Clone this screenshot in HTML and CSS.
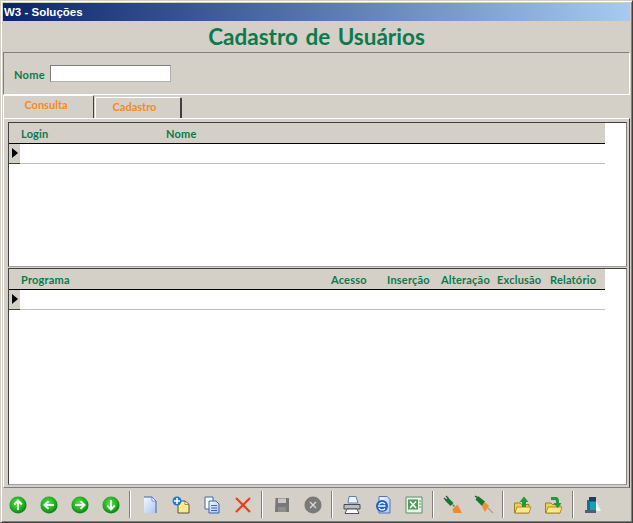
FILE: index.html
```html
<!DOCTYPE html>
<html lang="pt-BR">
<head>
 <meta charset="UTF-8">
 <title>W3 - Soluções</title>
 <link rel="stylesheet" href="styles.css">
</head>
<body>

<div class="janela">
  <div class="titulo-janela">W3 - Soluções</div>
  <h1 class="titulo">Cadastro de Usuários</h1>

  <div class="filtro">
    <label for="nome">Nome</label>
    <input type="text" id="nome">
  </div>

  <div class="abas">
    <div class="aba ativa">Consulta</div>
    <div class="aba">Cadastro</div>
  </div>

  <div class="painel">
    <div class="grade grade-login">
      <div class="cabecalho">
        <span>Login</span>
        <span>Nome</span>
      </div>
      <div class="linha"><div class="indicador"></div></div>
    </div>
    <div class="grade grade-programa">
      <div class="cabecalho">
        <span>Programa</span>
        <span>Acesso</span>
        <span>Inserção</span>
        <span>Alteração</span>
        <span>Exclusão</span>
        <span>Relatório</span>
      </div>
      <div class="linha"><div class="indicador"></div></div>
    </div>
  </div>

  <div class="barra">
    <svg width="0" height="0" class="defs">
      <defs>
        <radialGradient id="verde" cx="0.45" cy="0.4" r="0.6">
          <stop offset="0" stop-color="#5fe04f"/>
          <stop offset="0.65" stop-color="#22b022"/>
          <stop offset="1" stop-color="#0b7d12"/>
        </radialGradient>
        <linearGradient id="folha" x1="0" y1="0" x2="1" y2="1">
          <stop offset="0" stop-color="#f4f8ff"/>
          <stop offset="1" stop-color="#a9c6f2"/>
        </linearGradient>
      </defs>
    </svg>
    <!-- navegacao -->
    <div class="botao"><svg width="20" height="20" viewBox="0 0 20 20"><circle cx="10" cy="10" r="8.5" fill="url(#verde)"/><path d="M10 15V6M6.2 9.5 10 5.5 13.8 9.5" fill="none" stroke="#eaffea" stroke-width="2"/></svg></div>
    <div class="botao"><svg width="20" height="20" viewBox="0 0 20 20"><circle cx="10" cy="10" r="8.5" fill="url(#verde)"/><path d="M15 10H6M9.5 6.2 5.5 10 9.5 13.8" fill="none" stroke="#eaffea" stroke-width="2"/></svg></div>
    <div class="botao"><svg width="20" height="20" viewBox="0 0 20 20"><circle cx="10" cy="10" r="8.5" fill="url(#verde)"/><path d="M5 10H14M10.5 6.2 14.5 10 10.5 13.8" fill="none" stroke="#eaffea" stroke-width="2"/></svg></div>
    <div class="botao"><svg width="20" height="20" viewBox="0 0 20 20"><circle cx="10" cy="10" r="8.5" fill="url(#verde)"/><path d="M10 5V14M6.2 10.5 10 14.5 13.8 10.5" fill="none" stroke="#eaffea" stroke-width="2"/></svg></div>
    <div class="sep"></div>
    <!-- registro -->
    <div class="botao"><svg width="18" height="20" viewBox="0 0 18 20"><path d="M3 2H11L15 6V18H3Z" fill="url(#folha)"/><path d="M3 2H11L15 6V18" fill="none" stroke="#3f66b0"/><path d="M11 2V6H15Z" fill="#fff" stroke="#3f66b0" stroke-width="0.6"/></svg></div>
    <div class="botao"><svg width="20" height="20" viewBox="0 0 20 20"><path d="M7 6H14L18 9.5V18H7Z" fill="#fbe98e" stroke="#55533c"/><path d="M14 6V9.5H18Z" fill="#fff" stroke="#55533c" stroke-width="0.6"/><circle cx="6" cy="6" r="4.5" fill="#1f78d8"/><path d="M6 3V9M3 6H9" stroke="#fff" stroke-width="1.6"/></svg></div>
    <div class="botao"><svg width="18" height="20" viewBox="0 0 18 20"><path d="M2 2H10V14H2Z" fill="#fff" stroke="#3f66b0"/><path d="M6 6H13L16 9V18H6Z" fill="url(#folha)" stroke="#3f66b0"/><path d="M8 10.5H14M8 13H14M8 15.5H14" stroke="#3f66b0"/></svg></div>
    <div class="botao"><svg width="18" height="18" viewBox="0 0 18 18"><path d="M2 2 16 16M16 2 2 16" stroke="#e8401c" stroke-width="2.2"/></svg></div>
    <div class="sep"></div>
    <div class="botao"><svg width="16" height="16" viewBox="0 0 16 16"><path d="M1.5 1H15V15H1Z" fill="#787878"/><path d="M4 1.5H12V6H4Z" fill="#c8c8c8"/><path d="M4 10H12V15H4Z" fill="#8e8e8e"/></svg></div>
    <div class="botao"><svg width="20" height="20" viewBox="0 0 20 20"><circle cx="10" cy="10" r="8.5" fill="#7a7a7a"/><path d="M7 7 13 13M13 7 7 13" stroke="#ddd" stroke-width="1.2"/></svg></div>
    <div class="sep"></div>
    <!-- saida -->
    <div class="botao"><svg width="20" height="20" viewBox="0 0 20 20"><path d="M7 1.5H14L16 8H6Z" fill="#eef3fa" stroke="#6080a8"/><path d="M2 9.5H18V14H2Z" fill="#b4bcc8" stroke="#4a4a58"/><path d="M5 14H15L17 18.5H3Z" fill="#fff" stroke="#555"/></svg></div>
    <div class="botao"><svg width="20" height="20" viewBox="0 0 20 20"><path d="M6 1.5H14L17 4.5V18H6Z" fill="url(#folha)" stroke="#4f74b8"/><circle cx="9" cy="11" r="6" fill="#1f63c8"/><path d="M5 11H12.5M12 9A3.5 3.5 0 0 0 6 9.5M6 13A3.5 3.5 0 0 0 12 13.5" fill="none" stroke="#fff" stroke-width="1.3"/></svg></div>
    <div class="botao"><svg width="20" height="20" viewBox="0 0 20 20"><path d="M2 2H18V18H2Z" fill="#e8f2e4" stroke="#5c8f6a"/><path d="M4 4.5H14V14.5H4Z" fill="#4f9c5c"/><path d="M6 6.5 12 13M12 6.5 6 13" stroke="#fff" stroke-width="1.6"/><path d="M15 6H17M15 9H17M15 12H17" stroke="#5c8f6a"/></svg></div>
    <div class="sep"></div>
    <div class="botao"><svg width="20" height="20" viewBox="0 0 20 20"><path d="M1 3 3.5 5.5M3 1 5.5 3.5" stroke="#444" stroke-width="1.2"/><path d="M5 2.5 10.5 8 7.5 11 2 5.5Z" fill="#0f7a2c"/><path d="M9.5 9.5 11.5 11.5" stroke="#777" stroke-width="1.5"/><path d="M14.5 9.5 19 18 10.5 18 9.5 14Z" fill="#f08a30"/></svg></div>
    <div class="botao"><svg width="20" height="20" viewBox="0 0 20 20"><path d="M1 1 4 3" stroke="#444" stroke-width="1.4"/><path d="M4 1 11 6.5 8 11 1.5 4.5Z" fill="#0f7a2c"/><path d="M11 7 15 11 11 17 8 11.5Z" fill="#f29030"/><path d="M14 13 19 18" stroke="#a8a090" stroke-width="1.2"/></svg></div>
    <div class="sep"></div>
    <div class="botao"><svg width="20" height="20" viewBox="0 0 20 20"><path d="M1.5 8H7L8.5 9.5H16V18H1.5Z" fill="#f2cc5a" stroke="#9c8028"/><path d="M2 18 4 12H18L16 18Z" fill="#fbe68c" stroke="#b09030"/><path d="M11 1.5 15.5 7H13V12H9V7H6.5Z" fill="#1f9a3a"/></svg></div>
    <div class="botao"><svg width="20" height="20" viewBox="0 0 20 20"><path d="M1.5 8H7L8.5 9.5H16V18H1.5Z" fill="#f2cc5a" stroke="#9c8028"/><path d="M2 18 4 12H18L16 18Z" fill="#fbe68c" stroke="#b09030"/><path d="M7 2H12C14 2 15 4 15 6V8H17.5L13.5 13 9.5 8H12V6C12 5 11 5 10 5H7Z" fill="#1f9a3a"/></svg></div>
    <div class="sep"></div>
    <div class="botao"><svg width="20" height="20" viewBox="0 0 20 20"><path d="M4 5H13V15H4Z" fill="#17708e"/><path d="M6 2H13V6H6Z" fill="#1d3c66"/><path d="M7 7H13V15H7Z" fill="#1ea0b4"/><path d="M2 15H13V18H2Z" fill="#565c6c"/><path d="M13 6 18 16H13Z" fill="#eef6f8"/></svg></div>
  </div>
</div>

</body>
</html>
```

FILE: styles.css
```css
* {
  box-sizing: border-box;
}

html, body {
  margin: 0;
  height: 100%;
  overflow: hidden;
}

body {
  background-color: #d4d0c8;
  font-family: Lato, sans-serif;
}

.janela {
  width: 633px;
  height: 523px;
  padding: 2px;
  border-top: 1px solid #d4d0c8;
  border-left: 1px solid #d4d0c8;
  border-right: 1px solid #404040;
  border-bottom: 1px solid #404040;
  box-shadow: inset 1px 1px 0 #fff, inset -1px -1px 0 #808080;
  display: flex;
  flex-direction: column;
}

.titulo-janela {
  height: 18px;
  padding-left: 1px;
  background: linear-gradient(to right, #0a246a, #a6caf0);
  color: #fff;
  font-family: "Liberation Sans", sans-serif;
  font-size: 11.5px;
  font-weight: bold;
  line-height: 18px;
}

.titulo {
  height: 31px;
  margin: 0;
  color: #0b7a4c;
  font-size: 22.5px;
  font-weight: bold;
  line-height: 31px;
  word-spacing: 2px;
  text-align: center;
}

.filtro {
  height: 43px;
  display: flex;
  align-items: center;
  padding-left: 10px;
  border-top: 1px solid #808080;
  border-bottom: 1px solid #fff;
  border-right: 1px solid #fff;
  border-left: 1px solid #808080;
}

.filtro label {
  width: 36px;
  padding-top: 1px;
  color: #0b7a4c;
  font-size: 11px;
  font-weight: bold;
  letter-spacing: 0.3px;
}

.filtro input {
  width: 121px;
  height: 17px;
  padding: 0;
  background: #fff;
  border: 1px solid #808080;
  border-right-color: #b0b0b0;
  border-bottom-color: #b0b0b0;
}

.abas {
  height: 23px;
  display: flex;
  align-items: flex-end;
}

.aba {
  width: 87px;
  height: 21px;
  margin-left: 1px;
  padding-right: 7px;
  color: #f28c1e;
  font-size: 11px;
  font-weight: bold;
  line-height: 18px;
  text-align: center;
  border-top: 1px solid #fff;
  border-left: 1px solid #fff;
  border-right: 2px solid #404040;
  border-top-right-radius: 2px;
}

.aba.ativa {
  width: 91px;
  height: 23px;
  margin-left: 0;
  padding-right: 5px;
  border-right-width: 1px;
  line-height: 17px;
}

.painel {
  height: 370px;
  padding: 3px 2px 2px 4px;
  display: flex;
  flex-direction: column;
  gap: 1px;
  background-color: #d4d0c8;
  border-top: 1px solid #fff;
  border-left: 1px solid #fff;
  border-right: 1px solid #404040;
  border-bottom: 1px solid #808080;
}

.grade {
  background: #fff;
  border-top: 1px solid #404040;
  border-left: 1px solid #404040;
  border-right: 1px solid #808080;
  border-bottom: 1px solid #a0a0a0;
  padding-right: 21px;
}

.grade-login {
  height: 145px;
}

.grade-programa {
  flex: 1;
}

.cabecalho {
  height: 21px;
  display: grid;
  padding-left: 12px;
  background-color: #d4d0c8;
  border-bottom: 1px solid #000;
  color: #0b7a4c;
  font-size: 11px;
  font-weight: bold;
  line-height: 22px;
  letter-spacing: 0.2px;
}

.grade-login .cabecalho {
  grid-template-columns: 145px 1fr;
}

.grade-programa .cabecalho {
  grid-template-columns: 310px 56px 54px 56px 53px 1fr;
}

.linha {
  height: 20px;
  border-bottom: 1px solid #c0c0c0;
}

.indicador {
  position: relative;
  width: 11px;
  height: 20px;
  background-color: #d4d0c8;
  border-bottom: 1px solid #404040;
}

/* seta da linha atual */
.indicador::after {
  content: "";
  position: absolute;
  left: 3px;
  top: 4px;
  border-left: 6px solid #000;
  border-top: 5px solid transparent;
  border-bottom: 5px solid transparent;
}

.barra {
  flex: 1;
  display: flex;
  align-items: center;
  margin-left: -1px;
  margin-top: 1px;
}

.defs {
  position: absolute;
}

.botao {
  width: 31px;
  height: 24px;
  display: flex;
  align-items: center;
  justify-content: center;
}

.sep {
  width: 2px;
  height: 27px;
  margin: 0 3px;
  border-left: 1px solid #808080;
  border-right: 1px solid #fff;
}
```
